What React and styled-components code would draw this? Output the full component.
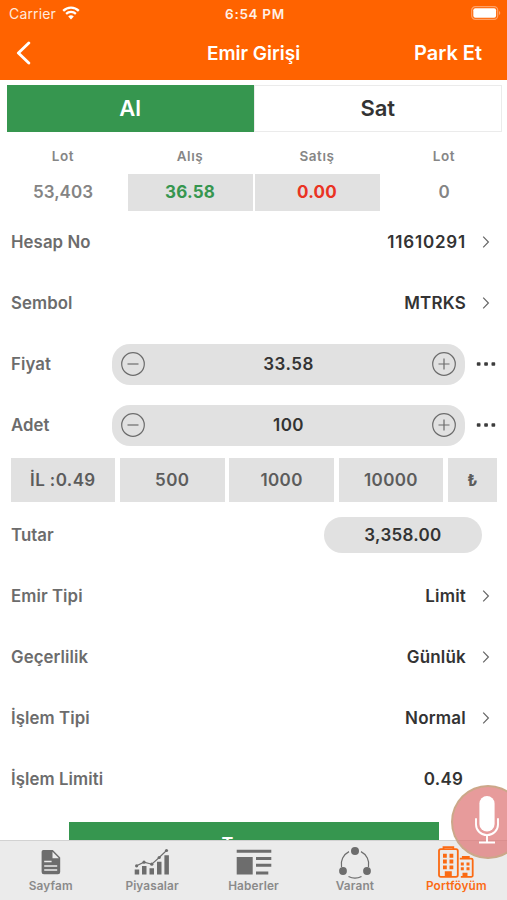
import React from "react";
import styled, { createGlobalStyle } from "styled-components";

const GlobalStyle = createGlobalStyle`
  * {
    box-sizing: border-box;
  }
  body {
    margin: 0;
    background: #fff;
    font-family: Inter, "Liberation Sans", sans-serif;
  }
  button {
    font-family: inherit;
    border: 0;
    padding: 0;
    background: none;
  }
  svg {
    display: block;
  }
`;

const quotes = [
  { title: "Lot", value: "53,403" },
  { title: "Alış", value: "36.58", color: "#36964f" },
  { title: "Satış", value: "0.00", color: "#ea3323" },
  { title: "Lot", value: "0" },
];

const WifiIcon = () => (
  <svg width="18" height="14" viewBox="0 0 18 14" fill="none" stroke="#fff">
    <path d="M1.2 4.9a11 11 0 0 1 15.6 0" strokeWidth="2.3" />
    <path d="M4.1 7.9a7 7 0 0 1 9.8 0" strokeWidth="2.2" />
    <path d="M9 13.4 6.2 10.5a4 4 0 0 1 5.6 0z" fill="#fff" stroke="none" />
  </svg>
);

const BatteryIcon = () => (
  <svg width="30" height="14" viewBox="0 0 30 14">
    <rect x="0.7" y="0.7" width="26" height="12.6" rx="3.6" fill="none" stroke="#ffa066" strokeWidth="1.2" />
    <rect x="2.3" y="2.3" width="22.8" height="9.4" rx="2" fill="#fff" />
    <path d="M28 5v4a2.2 2.2 0 0 0 0-4z" fill="#ffa066" />
  </svg>
);

const BackIcon = () => (
  <svg width="16" height="24" viewBox="0 0 16 24">
    <path d="M13.8 2 3.4 12l10.4 10" fill="none" stroke="#fff" strokeWidth="2.9" strokeLinecap="round" strokeLinejoin="round" />
  </svg>
);

const ChevronIcon = () => (
  <svg width="8" height="12" viewBox="0 0 8 12">
    <path d="M1.2 0.7 6.4 6l-5.2 5.3" fill="none" stroke="#666" strokeWidth="1.2" />
  </svg>
);

const StepIcon = ({ plus }) => (
  <svg width="24" height="24" viewBox="0 0 24 24" fill="none" stroke="#6c6c6c" strokeWidth="1.2">
    <circle cx="12" cy="12" r="11.3" />
    <path d={plus ? "M6.5 12h11M12 6.5v11" : "M6.5 12h11"} />
  </svg>
);

const DotsIcon = () => (
  <svg width="20" height="4" viewBox="0 0 20 4" fill="#3c3c3c">
    <rect x="0.8" y="0.2" width="3.7" height="3.6" rx="0.8" />
    <rect x="8.2" y="0.2" width="3.7" height="3.6" rx="0.8" />
    <rect x="15.5" y="0.2" width="3.7" height="3.6" rx="0.8" />
  </svg>
);

const MicIcon = () => (
  <svg width="26" height="50" viewBox="0 0 26 50" fill="none" stroke="#fff" strokeWidth="1.9">
    <rect x="5.4" y="1" width="15.2" height="35.5" rx="7.6" fill="#fff" stroke="none" />
    <path d="M2 23.3v6.2a11 10.6 0 0 0 22 0v-6.2M13 40v7.5M5 47.5h16" />
  </svg>
);

const PageIcon = () => (
  <svg width="36" height="32" viewBox="0 0 36 32">
    <path d="M10.3 3h9.5l7.4 7.4V25a2.3 2.3 0 0 1-2.3 2.3H10.9A2.3 2.3 0 0 1 8.6 25V4.7A1.7 1.7 0 0 1 10.3 3z" fill="#6d6d6d" />
    <path d="M19.5 4.7v6.6h6.4z" fill="#ebebeb" />
    <path d="M11.2 14.6h7.4M11.2 18.9h13M11.2 22.9h13" stroke="#ebebeb" strokeWidth="1.5" />
  </svg>
);

const ChartIcon = () => (
  <svg width="36" height="32" viewBox="0 0 36 32" fill="#6d6d6d">
    <path d="M.7 22.5h4.5v5H.7zM8 19h4.5v8.5H8zM15.5 21.2H20v6.3h-4.5zM23 14.8h4.5v12.7H23zM30.4 8.2h4.5v19.3h-4.5z" />
    <path d="M2.6 18.8 10 15.2l7.8 2 7.4-6.700L32.5 3.5" fill="none" stroke="#6d6d6d" strokeWidth="1.1" />
    <circle cx="2.6" cy="18.8" r="1.6" />
    <circle cx="10" cy="15.2" r="1.6" />
    <circle cx="17.8" cy="17.2" r="1.6" />
    <circle cx="25.2" cy="10.5" r="1.6" />
    <circle cx="32.5" cy="3.5" r="1.6" />
  </svg>
);

const NewsIcon = () => (
  <svg width="36" height="32" viewBox="0 0 36 32" fill="#6d6d6d">
    <path d="M.7 2.8h34.6v3H.7zM.7 10h16v17.4H.7zM20 10h15.3v3H20zM20 16.8h15.3v3H20zM20 24.4h12.3v3H20z" />
  </svg>
);

const WarrantIcon = () => (
  <svg width="36" height="32" viewBox="0 0 36 32" fill="#6d6d6d">
    <g fill="none" stroke="#6d6d6d" strokeWidth="1.2">
      <path d="M12 4.6A14.2 14.2 0 0 0 4.500 20" />
      <path d="M24 4.6A14.2 14.2 0 0 1 31.5 20" />
      <path d="M11.5 29.5a14 14 0 0 0 13 0" />
    </g>
    <circle cx="18" cy="4" r="4" />
    <circle cx="6" cy="24" r="3.9" />
    <circle cx="30" cy="24" r="3.9" />
  </svg>
);

const PortfolioIcon = () => (
  <svg width="36" height="32" viewBox="0 0 36 33" preserveAspectRatio="none" fill="#fb6a13">
    <g fill="none" stroke="#fb6a13" strokeWidth="1.8">
      <rect x="1" y="3.2" width="18.8" height="28.6" rx="1.8" />
      <path d="M5.5 3V1.2h9.8V3M21.8 13h11.4a1.5 1.5 0 0 1 1.5 1.5v15.8a1.5 1.5 0 0 1-1.5 1.5H22.8M24.8 12.8v-1.6h6v1.6" />
    </g>
    <path d="M5 8h3.8v4H5zM11.5 8h3.8v4h-3.8zM5 14h3.8v4H5zM11.5 14h3.8v4h-3.8zM5 20h3.8v4H5zM11.5 20h3.8v4h-3.8zM6.8 26h7v6h-7z" />
    <path d="M22.8 17h3v3h-3zM28.5 17h3v3h-3zM22.8 22h3v3h-3zM28.5 22h3v3h-3zM24.5 27.5h5V32h-5z" />
  </svg>
);

const menu = [
  { title: "Sayfam", icon: <PageIcon /> },
  { title: "Piyasalar", icon: <ChartIcon /> },
  { title: "Haberler", icon: <NewsIcon /> },
  { title: "Varant", icon: <WarrantIcon /> },
  { title: "Portföyüm", icon: <PortfolioIcon />, active: true },
];

const SelectRow = ({ label, value, wide }) => (
  <Row>
    <Label>{label}</Label>
    <Value $wide={wide}>{value}</Value>
    <ChevronIcon />
  </Row>
);

const StepperRow = ({ label, value }) => (
  <Row $right={11}>
    <Label>{label}</Label>
    <Stepper>
      <StepIcon />
      <StepValue>{value}</StepValue>
      <StepIcon plus />
    </Stepper>
    <DotsIcon />
  </Row>
);

const App = () => {
  return (
    <Screen>
      <GlobalStyle />
      <StatusBar>
        <Carrier>
          Carrier <WifiIcon />
        </Carrier>
        <Clock>6:54 PM</Clock>
        <BatteryIcon />
      </StatusBar>
      <Header>
        <BackIcon />
        <Title>Emir Girişi</Title>
        <ParkBtn>Park Et</ParkBtn>
      </Header>

      <Content>
        <Tabs>
          <Tab $active>Al</Tab>
          <Tab>Sat</Tab>
        </Tabs>
        <Quotes>
          {quotes.map((q, i) => (
            <Quote key={i}>
              <QuoteTitle>{q.title}</QuoteTitle>
              <QuoteValue $color={q.color}>{q.value}</QuoteValue>
            </Quote>
          ))}
        </Quotes>

        <SelectRow label="Hesap No" value="11610291" wide />
        <SelectRow label="Sembol" value="MTRKS" />
        <StepperRow label="Fiyat" value="33.58" />
        <StepperRow label="Adet" value="100" />
        <Chips>
          <Chip>İL :0.49</Chip>
          <Chip>500</Chip>
          <Chip>1000</Chip>
          <Chip>10000</Chip>
          <Chip $small>₺</Chip>
        </Chips>
        <Row $right={25}>
          <Label>Tutar</Label>
          <Total>3,358.00</Total>
        </Row>
        <SelectRow label="Emir Tipi" value="Limit" />
        <SelectRow label="Geçerlilik" value="Günlük" />
        <SelectRow label="İşlem Tipi" value="Normal" />
        <Row $right={44}>
          <Label>İşlem Limiti</Label>
          <Limit>0.49</Limit>
        </Row>
        <Submit>Tamam</Submit>
      </Content>

      <Menu>
        {menu.map((m) => (
          <MenuItem key={m.title} $active={m.active}>
            <MenuIcon $active={m.active}>{m.icon}</MenuIcon>
            {m.title}
          </MenuItem>
        ))}
      </Menu>
      <MicBtn>
        <MicIcon />
      </MicBtn>
    </Screen>
  );
};

export default App;

const Screen = styled.div`
  position: relative;
  display: flex;
  flex-direction: column;
  width: 507px;
  height: 900px;
  overflow: hidden;
  background: #fff;
  color: #333;
`;

const StatusBar = styled.div`
  display: grid;
  grid-template-columns: 1fr auto 1fr;
  align-items: center;
  height: 27px;
  padding: 0 6px 0 9px;
  background: #ff6300;
  color: #fff;

  > svg {
    justify-self: end;
    margin-top: -1px;
  }
`;

const Carrier = styled.div`
  display: flex;
  align-items: center;
  gap: 6px;
  font-size: 14px;
  letter-spacing: 0.15px;
  color: #ffe9dc;

  svg {
    margin-top: -2px;
  }
`;

const Clock = styled.div`
  font-size: 13.5px;
  font-weight: 600;
  letter-spacing: 0.7px;
  color: #fff0e6;
`;

const Header = styled.div`
  display: grid;
  grid-template-columns: 1fr auto 1fr;
  align-items: center;
  height: 53px;
  padding: 0 25px 2px 15px;
  background: #ff6300;
  color: #fff;
`;

const Title = styled.h1`
  margin: 0;
  padding: 1px 0 0 10px;
  font-size: 19px;
  font-weight: 600;
`;

const ParkBtn = styled.button`
  justify-self: end;
  font-size: 20px;
  font-weight: 600;
  color: #fff;
`;

const Content = styled.div`
  flex: 1;
  min-height: 0;
  overflow: hidden;
`;

const Tabs = styled.div`
  display: flex;
  height: 47.5px;
  margin: 4.5px 5px 0 7px;
`;

const Tab = styled.button`
  flex: 1;
  font-size: 22px;
  font-weight: 600;
  color: ${(p) => (p.$active ? "#fff" : "#333")};
  background: ${(p) => (p.$active ? "#36964f" : "#fff")};
  border: ${(p) => (p.$active ? "0" : "1px solid #ebebeb")};
`;

const Quotes = styled.div`
  display: grid;
  grid-template-columns: repeat(4, 125px);
  justify-content: center;
  gap: 2px;
  padding-top: 14px;
  height: 79.5px;
`;

const Quote = styled.div`
  text-align: center;
`;

const QuoteTitle = styled.div`
  height: 28px;
  line-height: 20px;
  font-size: 13.5px;
  font-weight: 600;
  letter-spacing: 0.6px;
  color: #868686;
`;

const QuoteValue = styled.div`
  height: 37px;
  line-height: 37px;
  font-size: 17px;
  font-weight: ${(p) => (p.$color ? 700 : 600)};
  letter-spacing: ${(p) => (p.$color ? 0.2 : 0)}px;
  color: ${(p) => p.$color || "#848484"};
  background: ${(p) => (p.$color ? "#e1e1e1" : "transparent")};
`;

const Row = styled.div`
  display: flex;
  align-items: center;
  height: 61px;
  padding: 0 ${(p) => p.$right || 17}px 0 11px;
`;

const Label = styled.div`
  flex: 1;
  font-size: 16.8px;
  font-weight: 600;
  letter-spacing: 0.08px;
  color: #6c6c6c;
`;

const Value = styled.div`
  margin-right: 16px;
  font-size: 17px;
  font-weight: 600;
  letter-spacing: ${(p) => (p.$wide ? 0.8 : 0.2)}px;
`;

const Stepper = styled.div`
  display: flex;
  align-items: center;
  width: 353px;
  height: 41px;
  margin-right: 11px;
  padding: 0 9px;
  border-radius: 18px;
  background: #e1e1e1;
`;

const StepValue = styled.div`
  flex: 1;
  text-align: center;
  font-size: 17px;
  font-weight: 600;
  letter-spacing: 0.5px;
`;

const Chips = styled.div`
  display: flex;
  gap: 4.7px;
  height: 49px;
  padding: 2.5px 10px 2.5px 10.5px;
`;

const Chip = styled.button`
  ${(p) => (p.$small ? "width: 49px;" : "flex: 1;")}
  font-size: ${(p) => (p.$small ? 16 : 17)}px;
  font-weight: ${(p) => (p.$small ? 700 : 600)};
  letter-spacing: 0.4px;
  color: #5c5c5c;
  background: #e1e1e1;
`;

const Total = styled.div`
  width: 158px;
  height: 36.5px;
  line-height: 36.5px;
  border-radius: 18px;
  background: #e1e1e1;
  text-align: center;
  font-size: 17px;
  font-weight: 600;
  letter-spacing: 0.3px;
`;

const Limit = styled(Value)`
  margin-right: 0;
`;

const Submit = styled.button`
  display: block;
  width: 370px;
  height: 46px;
  margin: 12px auto 0 69px;
  font-size: 18px;
  font-weight: 600;
  letter-spacing: 0.3px;
  color: #fff;
  background: #36964f;
`;

const Menu = styled.div`
  display: flex;
  height: 60px;
  background: #ebebeb;
  border-top: 1px solid #d2d2d2;
`;

const MenuItem = styled.button`
  flex: 1;
  display: flex;
  flex-direction: column;
  align-items: center;
  font-size: 11.8px;
  font-weight: 600;
  letter-spacing: 0.15px;
  line-height: 15px;
  color: ${(p) => (p.$active ? "#fb6a13" : "#8a8a8a")};
`;

const MenuIcon = styled.div`
  height: 38px;
  padding-top: ${(p) => (p.$active ? 5 : 6)}px;
`;

const MicBtn = styled.button`
  position: absolute;
  left: 451px;
  top: 785px;
  width: 74px;
  height: 74px;
  display: flex;
  align-items: center;
  justify-content: center;
  padding: 0 2px 5px 0;
  border: 2px solid rgba(200, 170, 135, 0.85);
  border-radius: 50%;
  background: rgba(222, 116, 116, 0.72);
`;
